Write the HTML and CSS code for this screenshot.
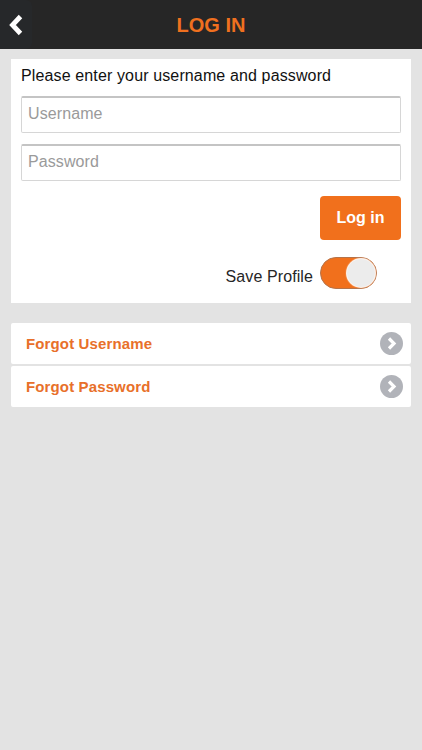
FILE: index.html
```html
<!DOCTYPE html>
<html lang="en">
<head>
<meta charset="utf-8">
<title>Log in</title>
<link rel="stylesheet" href="styles.css">
</head>
<body>
<header class="topbar">
  <button class="back" aria-label="Back">
    <svg width="16" height="22" viewBox="0 0 16 22"><path d="M12.5 2.5 4.5 11l8 8.5" fill="none" stroke="#fff" stroke-width="4.8"/></svg>
  </button>
  <h1 class="title">LOG IN</h1>
</header>
<main class="content">
  <section class="card login">
    <p class="prompt">Please enter your username and password</p>
    <div class="field">Username</div>
    <div class="field">Password</div>
    <div class="actions"><button class="submit">Log in</button></div>
    <div class="save">
      <span class="save-label">Save Profile</span>
      <span class="toggle"><span class="knob"></span></span>
    </div>
  </section>
  <nav class="links">
    <a class="link">Forgot Username
      <svg class="chev" width="23" height="23" viewBox="0 0 23 23"><circle cx="11.5" cy="11.5" r="11.5" fill="#b1b3b9"/><path d="M9 6.5l5 5-5 5" fill="none" stroke="#fff" stroke-width="3.2"/></svg>
    </a>
    <a class="link">Forgot Password
      <svg class="chev" width="23" height="23" viewBox="0 0 23 23"><circle cx="11.5" cy="11.5" r="11.5" fill="#b1b3b9"/><path d="M9 6.5l5 5-5 5" fill="none" stroke="#fff" stroke-width="3.2"/></svg>
    </a>
  </nav>
</main>
</body>
</html>
```
FILE: styles.css
```css
* { box-sizing: border-box; }
html, body { margin: 0; padding: 0; }
body {
  width: 422px;
  height: 750px;
  overflow: hidden;
  background: #e3e3e3;
  font-family: "Liberation Sans", Arial, sans-serif;
}
.topbar {
  position: relative;
  height: 49px;
  padding-top: 2px;
  background: #262626;
  display: flex;
  align-items: center;
  justify-content: center;
}
.back {
  position: absolute;
  left: 0;
  top: 0;
  width: 32px;
  height: 49px;
  padding: 0;
  border: 0;
  border-radius: 0 6px 6px 0;
  background: #26282a;
  display: flex;
  align-items: center;
  justify-content: center;
}
.title {
  margin: 0;
  font-size: 20px;
  font-weight: 700;
  color: #f0701f;
}
.content { padding: 10px 11px 0; }
.card {
  background: #fff;
}
.login {
  height: 244px;
  padding: 7px 10px 0;
}
.prompt {
  margin: 0 0 11px;
  font-size: 16px;
  line-height: 19px;
  letter-spacing: 0.13px;
  color: #111;
}
.field {
  height: 37px;
  margin-bottom: 11px;
  padding: 0 6px;
  border: 1px solid #d6d6d6;
  border-top: 2px solid #c4c4c4;
  border-radius: 2px;
  font-size: 16px;
  line-height: 32px;
  letter-spacing: 0.1px;
  color: #9a9a9a;
}
.actions {
  display: flex;
  justify-content: flex-end;
  margin-top: 15px;
}
.submit {
  width: 81px;
  height: 44px;
  border: 0;
  border-radius: 4px;
  background: #f1701c;
  color: #fff;
  font: 700 16px "Liberation Sans", Arial, sans-serif;
}
.save {
  display: flex;
  justify-content: flex-end;
  align-items: center;
  gap: 7px;
  margin-top: 17px;
  padding-right: 24px;
}
.save-label {
  margin-top: 8px;
  font-size: 16px;
  letter-spacing: 0.1px;
  color: #262626;
}
.toggle {
  width: 57px;
  height: 32px;
  padding: 1px;
  border: 1px solid #b5734a;
  border-radius: 16px;
  background: #f1701c;
  display: flex;
  justify-content: flex-end;
}
.knob {
  width: 28px;
  height: 28px;
  border-radius: 50%;
  background: #ececec;
  box-shadow: 0 0 1px 1px #fff;
}
.links {
  margin-top: 20px;
  display: flex;
  flex-direction: column;
  gap: 2px;
}
.link {
  height: 41px;
  padding: 0 8px 0 15px;
  background: #fff;
  border-radius: 2px;
  display: flex;
  align-items: center;
  justify-content: space-between;
  font-size: 15px;
  letter-spacing: 0.13px;
  font-weight: 700;
  color: #e8702a;
}
```
